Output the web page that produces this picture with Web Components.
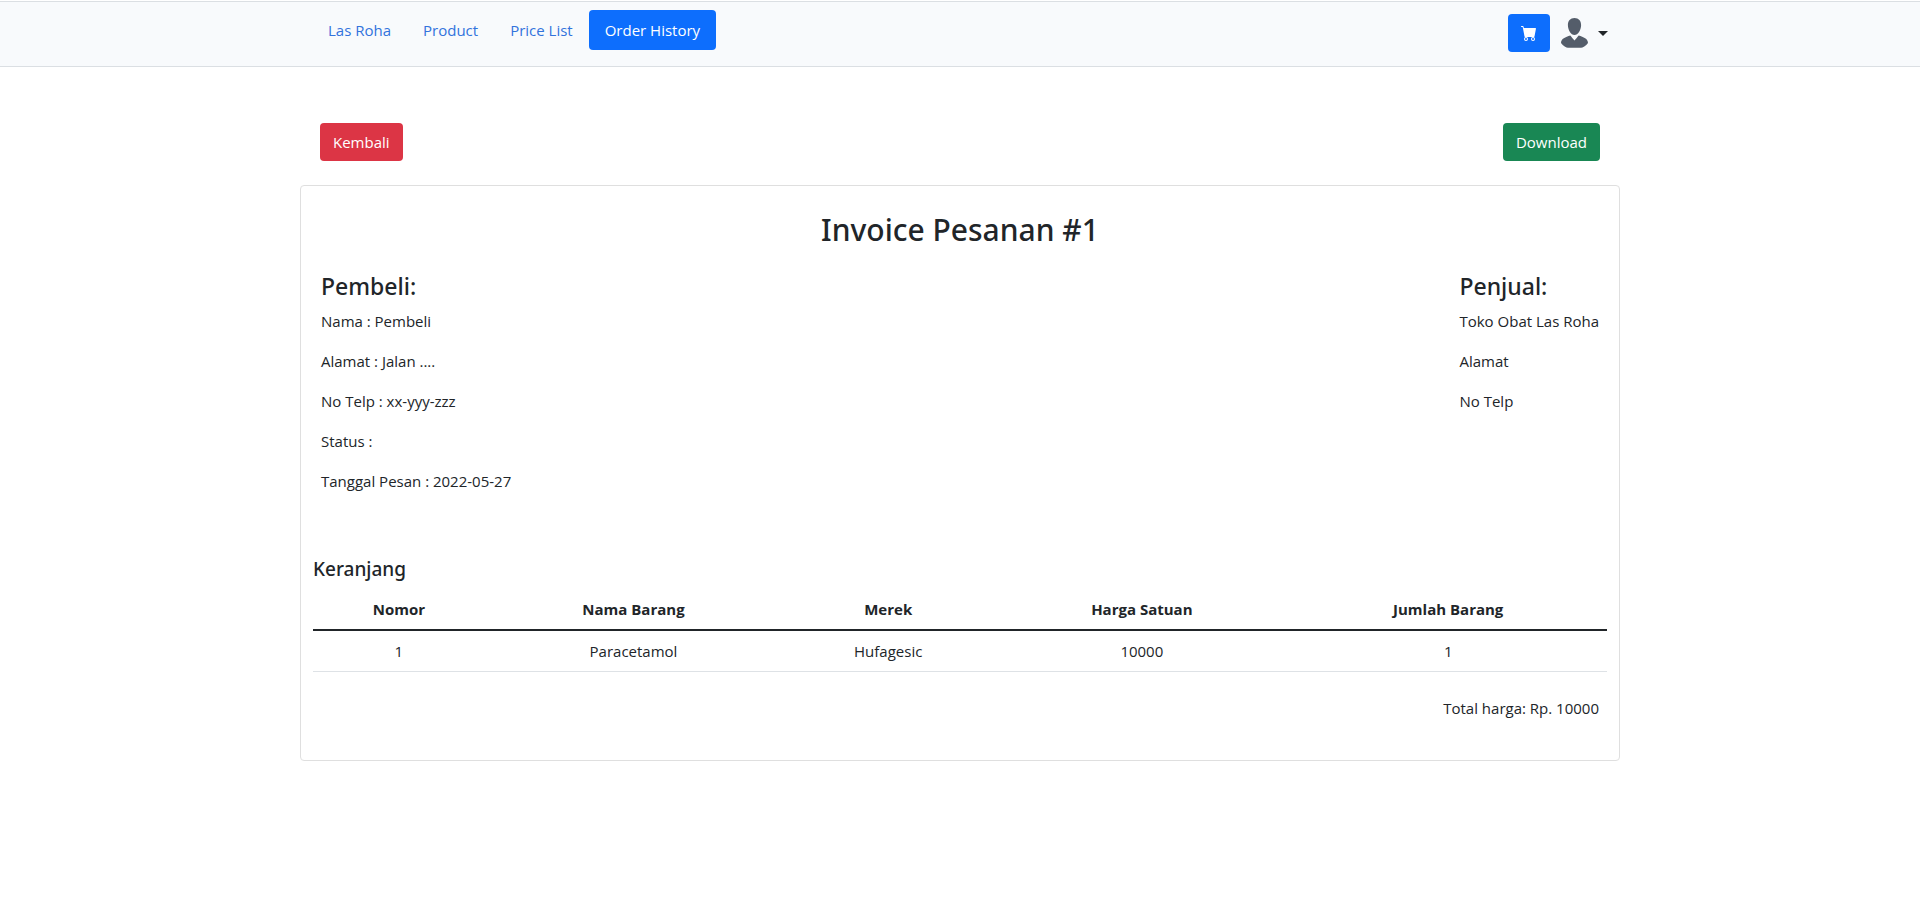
<!DOCTYPE html>
<html lang="id">
<head>
<meta charset="utf-8">
<meta name="viewport" content="width=device-width, initial-scale=1">
<title>Las Roha - Invoice</title>
<style>
  body { margin: 0; background: #fff; color: #212529; font: 15px/24px "Open Sans", "Noto Sans", sans-serif; --heading-font: "Noto Sans", "Open Sans", sans-serif; }
</style>
</head>
<body>
<invoice-page></invoice-page>
<script>
const define = (name, html) => {
  const template = document.createElement('template');
  template.innerHTML = '<style>*{box-sizing:border-box}</style>' + html;
  customElements.define(name, class extends HTMLElement {
    constructor() {
      super();
      this.attachShadow({ mode: 'open' }).append(template.content.cloneNode(true));
    }
  });
};

define('nav-link', `
  <style>
    :host { display: block; }
    a { display: block; padding: 8px 16px; border-radius: 4px; color: #3273dc; text-decoration: none; white-space: nowrap; }
    :host([active]) a { background: #0d6efd; color: #fff; }
  </style>
  <a href="#"><slot></slot></a>`);

define('action-button', `
  <style>
    :host { display: inline-block; --tone: #0d6efd; }
    :host([tone="danger"]) { --tone: #dc3545; }
    :host([tone="success"]) { --tone: #198754; }
    button { display: block; height: 38px; padding: 0 13px; border: 0; border-radius: 4px; background: var(--tone); color: #fff; font: inherit; cursor: pointer; }
  </style>
  <button type="button"><slot></slot></button>`);

define('cart-button', `
  <style>
    :host { display: block; }
    button { display: grid; place-items: center; width: 42px; height: 38px; padding: 0; border: 0; border-radius: 4px; background: #0d6efd; color: #fff; cursor: pointer; }
  </style>
  <button type="button" aria-label="Keranjang">
    <svg width="16" height="16" viewBox="0 0 16 16" fill="currentColor" aria-hidden="true"><path d="M0 1.5A.5.5 0 0 1 .5 1H2a.5.5 0 0 1 .485.379L2.89 3H14.5a.5.5 0 0 1 .491.592l-1.5 8A.5.5 0 0 1 13 12H4a.5.5 0 0 1-.491-.408L2.01 3.607 1.61 2H.5a.5.5 0 0 1-.5-.5zM5 12a2 2 0 1 0 0 4 2 2 0 0 0 0-4zm7 0a2 2 0 1 0 0 4 2 2 0 0 0 0-4zm-7 1a1 1 0 1 1 0 2 1 1 0 0 1 0-2zm7 0a1 1 0 1 1 0 2 1 1 0 0 1 0-2z"/></svg>
  </button>`);

define('account-menu', `
  <style>
    :host { display: block; }
    button { display: flex; align-items: center; gap: 10px; padding: 0; border: 0; background: none; color: #212529; cursor: pointer; }
    .caret { width: 0; border: 5px solid transparent; border-top-color: currentColor; border-bottom: 0; }
  </style>
  <button type="button" aria-label="Akun" aria-haspopup="menu">
    <svg width="27" height="30" viewBox="0 0 27 30" fill="#545d6a" aria-hidden="true"><path d="M13.5 0C17.7 0 20.2 3 20.1 7.3C20 12.2 17 17 13.5 17C10 17 7 12.2 6.9 7.3C6.8 3 9.3 0 13.5 0Z"/><path d="M9.3 17.6C10.5 18.7 11.5 20.6 13.5 22.5C15.5 20.6 16.5 18.7 17.7 17.6C22.5 19.1 27 20.8 27 25C25 28 21.5 29.7 20 29.7H7C5.5 29.7 2 28 0 25C0 20.8 4.5 19.1 9.3 17.6Z"/></svg>
    <span class="caret"></span>
  </button>`);

define('site-header', `
  <style>
    :host { display: block; margin-top: 1px; border: solid #dbdfe3; border-width: 1px 0; background: #f8fafc; }
    .bar { display: flex; justify-content: space-between; align-items: stretch; max-width: 1320px; margin: 0 auto; padding: 8px 12px 0; }
    nav { display: flex; padding-bottom: 16px; }
    .tools { display: flex; align-items: center; gap: 11px; padding-bottom: 10px; }
  </style>
  <header class="bar">
    <nav>
      <nav-link>Las Roha</nav-link>
      <nav-link>Product</nav-link>
      <nav-link>Price List</nav-link>
      <nav-link active>Order History</nav-link>
    </nav>
    <div class="tools"><cart-button></cart-button><account-menu></account-menu></div>
  </header>`);

define('contact-block', `
  <style>
    :host { display: block; }
    h4 { margin: 0 0 8px; font-family: var(--heading-font); font-size: 23px; line-height: 30px; font-weight: 500; }
    ::slotted(p) { margin: 0 0 16px; }
  </style>
  <h4><slot name="title"></slot></h4>
  <slot></slot>`);

define('cart-table', `
  <style>
    :host { display: block; }
    h5 { margin: 0 0 8px; font-family: var(--heading-font); font-size: 19px; line-height: 24px; font-weight: 500; }
    table { width: 100%; border-collapse: separate; border-spacing: 0; text-align: center; }
    th, td { padding: 8px; border-bottom: 1px solid #dee2e6; }
    th { border-bottom: 2px solid #212529; font-weight: 700; }
  </style>
  <h5 id="t">Keranjang</h5>
  <table aria-labelledby="t">
    <thead><tr><th scope="col">Nomor</th><th scope="col">Nama Barang</th><th scope="col">Merek</th><th scope="col">Harga Satuan</th><th scope="col">Jumlah Barang</th></tr></thead>
    <tbody><tr><td>1</td><td>Paracetamol</td><td>Hufagesic</td><td>10000</td><td>1</td></tr></tbody>
  </table>`);

define('invoice-card', `
  <style>
    :host { display: block; border: 1px solid #dfdfdf; border-radius: 4px; padding: 24px 12px 40px; }
    h2 { margin: 0 0 21px; font-family: var(--heading-font); font-size: 30px; line-height: 40px; font-weight: 500; text-align: center; }
    .parties { display: flex; justify-content: space-between; padding: 0 8px; margin-bottom: 48px; }
    .total { margin: 0; padding: 24px 8px 0; text-align: right; }
  </style>
  <h2>Invoice Pesanan #1</h2>
  <div class="parties">
    <contact-block><span slot="title">Pembeli:</span>
      <p>Nama : Pembeli</p><p>Alamat : Jalan ....</p><p>No Telp : xx-yyy-zzz</p><p>Status :</p><p>Tanggal Pesan : 2022-05-27</p>
    </contact-block>
    <contact-block><span slot="title">Penjual:</span>
      <p>Toko Obat Las Roha</p><p>Alamat</p><p>No Telp</p>
    </contact-block>
  </div>
  <cart-table></cart-table>
  <p class="total">Total harga: Rp. 10000</p>`);

define('invoice-page', `
  <style>
    :host { display: block; }
    main { max-width: 1320px; margin: 0 auto; padding: 56px 0 48px; }
    .actions { display: flex; justify-content: space-between; padding: 0 20px; margin-bottom: 24px; }
  </style>
  <site-header></site-header>
  <main>
    <div class="actions">
      <action-button tone="danger">Kembali</action-button>
      <action-button tone="success">Download</action-button>
    </div>
    <invoice-card></invoice-card>
  </main>`);
</script>
</body>
</html>
